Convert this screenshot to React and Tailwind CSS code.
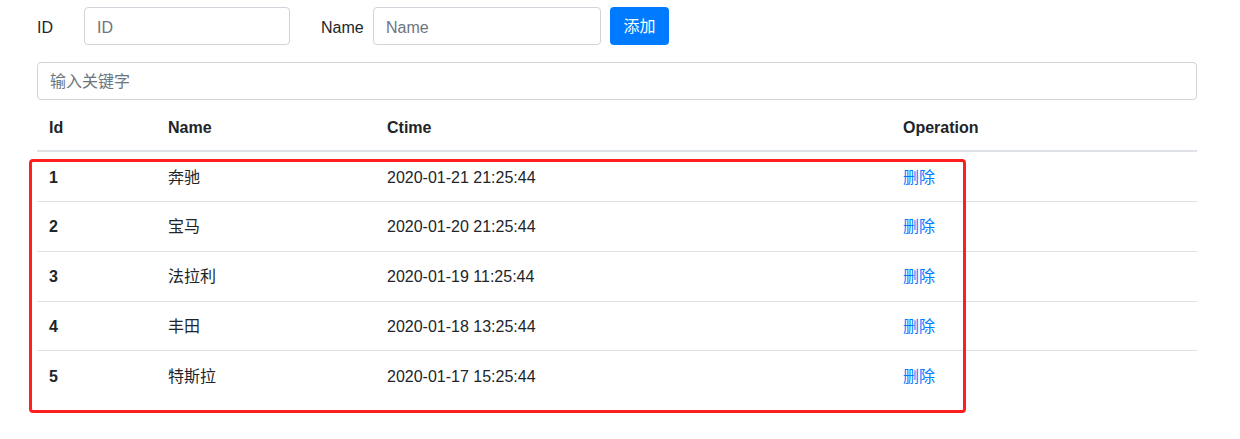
import React from "react";

const rows = [
  { id: 1, name: "奔驰", ctime: "2020-01-21 21:25:44" },
  { id: 2, name: "宝马", ctime: "2020-01-20 21:25:44" },
  { id: 3, name: "法拉利", ctime: "2020-01-19 11:25:44" },
  { id: 4, name: "丰田", ctime: "2020-01-18 13:25:44" },
  { id: 5, name: "特斯拉", ctime: "2020-01-17 15:25:44" },
];

export default function App() {
  return (
    <div
      className="relative w-[1240px] h-[439px] bg-white text-[#212529] text-[16px] leading-[24px] overflow-hidden"
      style={{ fontFamily: '"Liberation Sans", "Noto Sans CJK SC", sans-serif' }}
    >
      <div className="ml-[37px] w-[1160px] pt-[7px]">
        <div className="flex items-center h-[38px]">
          <label className="w-[47px] pt-[3px]">ID</label>
          <input
            placeholder="ID"
            className="w-[206px] h-[38px] border border-[#ced4da] rounded-[4px] px-[12px] pt-[3px] outline-none placeholder:text-[#6c757d]"
          />
          <label className="ml-[31px] w-[52px] pt-[3px]">Name</label>
          <input
            placeholder="Name"
            className="w-[228px] h-[38px] border border-[#ced4da] rounded-[4px] px-[12px] pt-[3px] outline-none placeholder:text-[#6c757d]"
          />
          <button className="ml-[9px] w-[59px] h-[38px] pt-[2px] bg-[#007bff] text-white rounded-[4px]">
            添加
          </button>
        </div>
        <input
          placeholder="输入关键字"
          className="mt-[17px] block w-full h-[38px] border border-[#ced4da] rounded-[4px] px-[12px] pt-[2px] outline-none placeholder:text-[#6c757d]"
        />
        <div className="mt-[2px]">
          <div className="grid grid-cols-[119px_219px_516px_306px] h-[50px] pt-[3px] border-b-2 border-[#dee2e6] font-bold items-center">
            <div className="pl-[12px]">Id</div>
            <div className="pl-[12px]">Name</div>
            <div className="pl-[12px]">Ctime</div>
            <div className="pl-[12px]">Operation</div>
          </div>
          {rows.map((r, i) => (
            <div
              key={r.id}
              className={
                "grid grid-cols-[119px_219px_516px_306px] items-center box-border pt-[2px] " +
                (i === 0 ? "h-[49px]" : "h-[49.75px] border-t border-[#dee2e6]")
              }
            >
              <div className="pl-[12px] font-bold">{r.id}</div>
              <div className="pl-[12px]">{r.name}</div>
              <div className="pl-[12px]">{r.ctime}</div>
              <div className="pl-[12px]">
                <a href="#" className="text-[#007bff]">删除</a>
              </div>
            </div>
          ))}
        </div>
      </div>
      <div className="absolute left-[29px] top-[159px] w-[937px] h-[254px] border-[3px] border-[#ff1f1f] rounded-[4px] pointer-events-none" />
    </div>
  );
}
